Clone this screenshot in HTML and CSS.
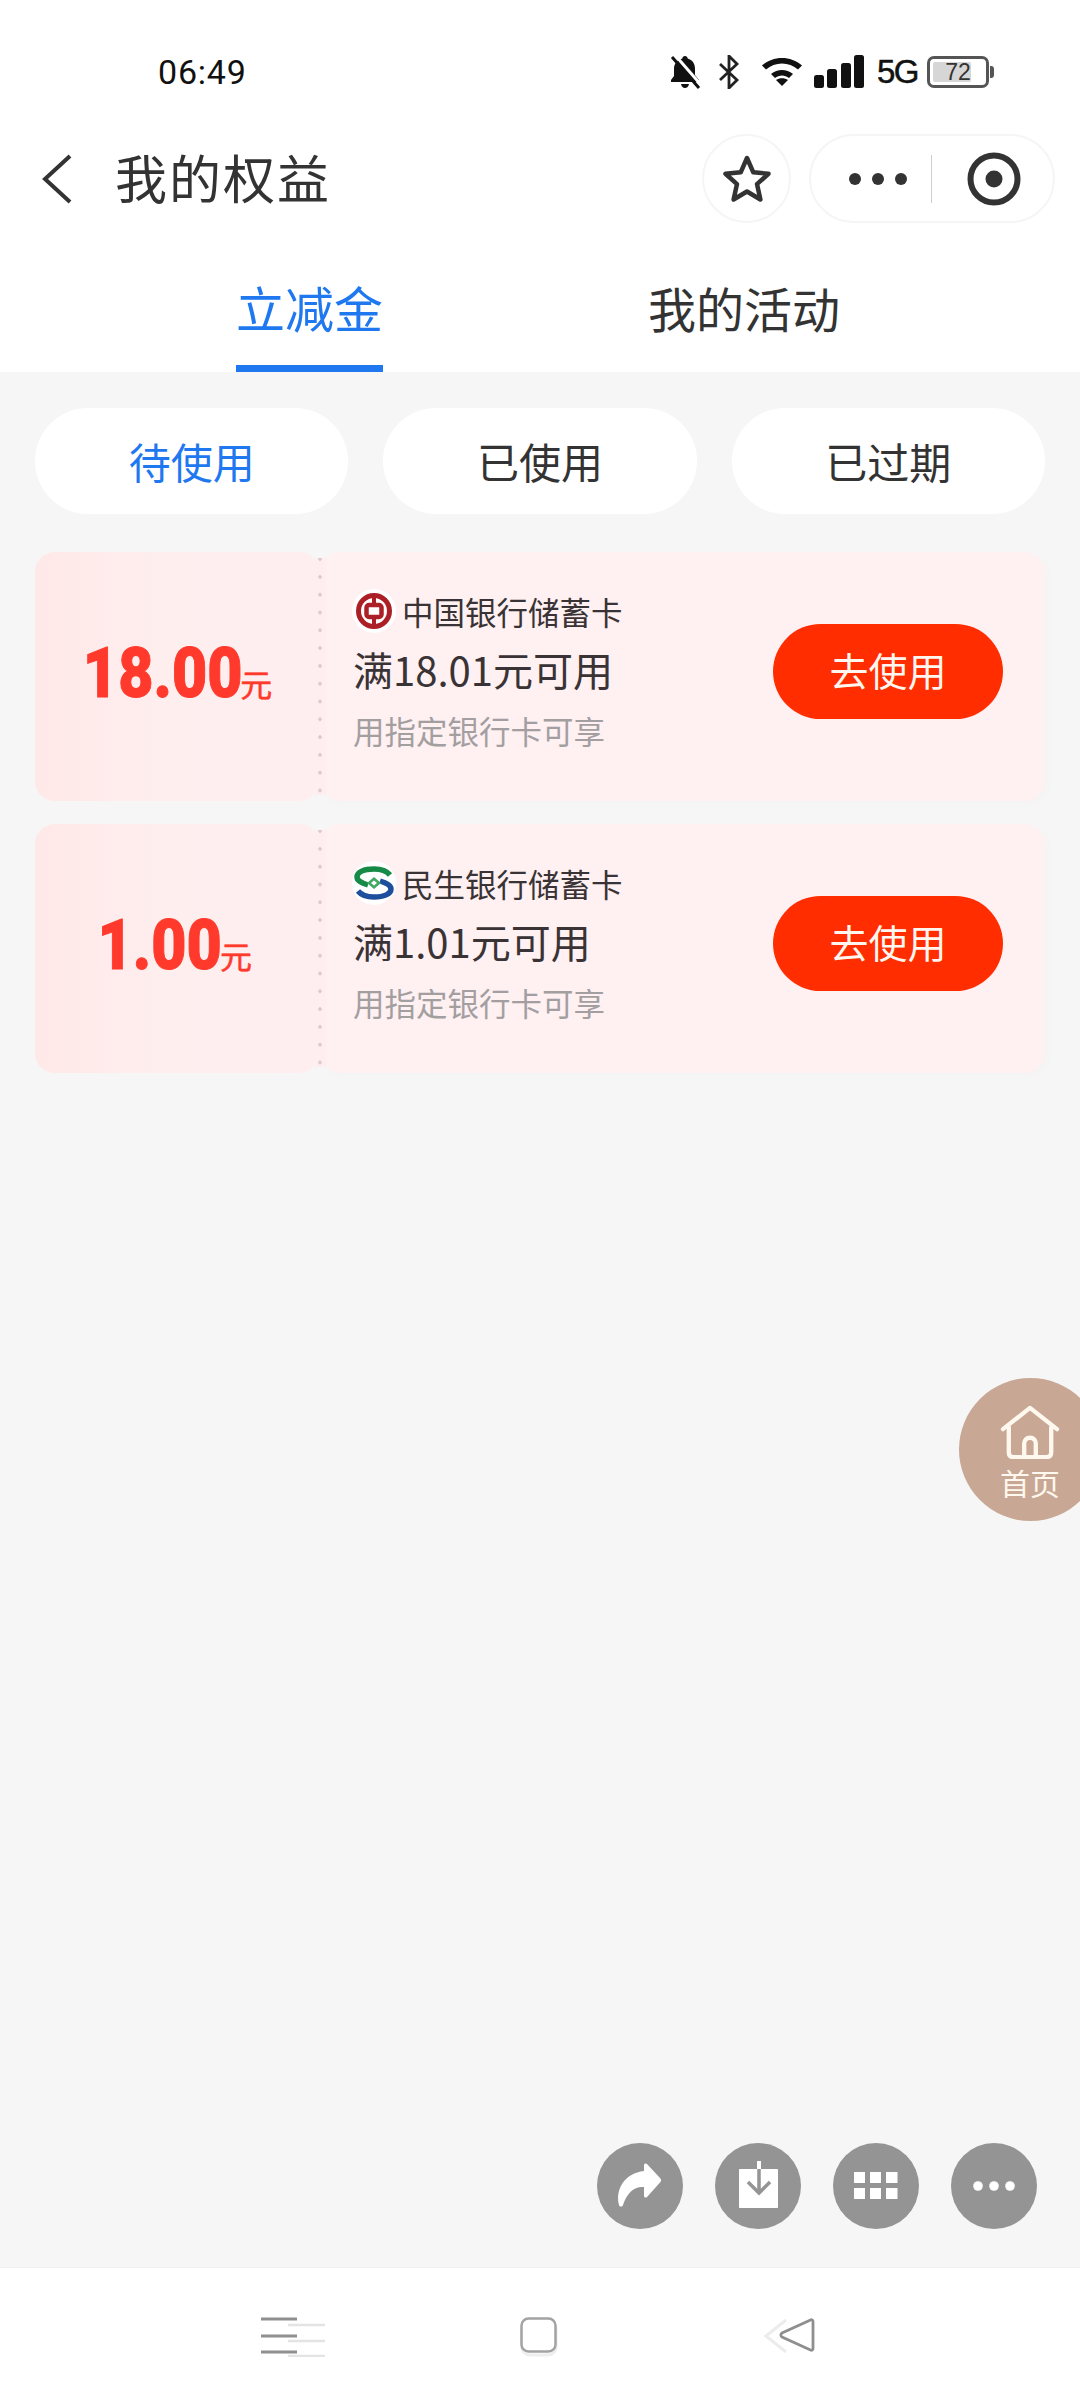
FILE: index.html
```html
<!DOCTYPE html>
<html lang="zh-CN">
<head>
<meta charset="utf-8">
<title>我的权益</title>
<link rel="stylesheet" href="styles.css">
</head>
<body>
<div class="page">
  <div class="top">
    <div class="status">
      <span class="time">06:49</span>
      <div class="status-icons">
        <svg class="ic-bell" viewBox="0 0 32 34"><path d="M16 1c1.600 0 2.500 1 2.700 2.600C23.500 5 26 9 26 14v6l4 5v2H2v-2l3-4v-7c0-5 3-9 8.300-10.400C13.500 2 14.400 1 16 1z" fill="#111"/><path d="M12 29h8c-.5 2.500-2 4-4 4s-3.500-1.500-4-4z" fill="#111"/><path d="M6 0l27 31" stroke="#fff" stroke-width="3"/><path d="M3 2l27 31" stroke="#111" stroke-width="3"/></svg>
        <svg class="ic-bt" viewBox="0 0 22 34"><path d="M2 9l17 16-8 8V1l8 8L2 25" fill="none" stroke="#222" stroke-width="2.800"/></svg>
        <svg class="ic-wifi" viewBox="0 0 42 32"><path d="M1 10.500C12 .5 30 .5 41 10.500l-4 4C28 6.500 14 6.500 5 14.500z" fill="#111"/><path d="M10 19c6.500-5.500 15.500-5.500 22 0l-4 4c-4-3.500-10-3.500-14 0z" fill="#111"/><path d="M15 25c3.500-2.500 8.500-2.500 12 0l-6 6z" fill="#111"/></svg>
        <svg class="ic-signal" viewBox="0 0 50 33"><rect x="0" y="20" width="10" height="13" rx="2.500" fill="#111"/><rect x="13" y="14" width="10" height="19" rx="2.500" fill="#111"/><rect x="27" y="8" width="10" height="25" rx="2.500" fill="#111"/><rect x="40" y="0" width="10" height="33" rx="2.500" fill="#111"/></svg>
        <span class="net">5G</span>
        <div class="battery"><div class="battery-body"><span class="battery-fill"></span><span class="battery-text">72</span></div><span class="battery-nub"></span></div>
      </div>
    </div>

    <div class="nav">
      <svg class="back" viewBox="0 0 30 50"><path d="M28 2L3 25l25 23" fill="none" stroke="#333" stroke-width="4"/></svg>
      <h1 class="title">我的权益</h1>
      <div class="nav-actions">
        <div class="star-btn"><svg viewBox="0 0 50 50"><path d="M25 4l6.300 14.300 15.200 1.500-11.500 10.300 3.400 15.400L25 37.500l-13.400 8 3.400-15.400L3.500 19.800l15.200-1.500z" fill="none" stroke="#333" stroke-width="4.500" stroke-linejoin="round"/></svg></div>
        <div class="capsule">
          <div class="cap-more"><i></i><i></i><i></i></div>
          <span class="cap-sep"></span>
          <svg class="cap-target" viewBox="0 0 54 54"><circle cx="27" cy="27" r="23.500" fill="none" stroke="#333" stroke-width="6"/><circle cx="27" cy="27" r="8.500" fill="#333"/></svg>
        </div>
      </div>
    </div>

    <div class="tabs">
      <div class="tab tab-on">立减金</div>
      <div class="tab">我的活动</div>
    </div>
  </div>

  <main class="content">
    <div class="pills">
      <div class="pill pill-on">待使用</div>
      <div class="pill">已使用</div>
      <div class="pill">已过期</div>
    </div>

    <div class="coupons">
      <div class="coupon">
        <div class="amount"><b>18.00</b><span>元</span></div>
        <div class="dots"></div>
        <div class="info">
          <div class="texts">
            <div class="bank">
              <svg class="logo" viewBox="0 0 44 44"><circle cx="22" cy="22" r="22" fill="#fff"/><circle cx="22" cy="22" r="15.500" fill="none" stroke="#ad1f26" stroke-width="5"/><path d="M22 5v34" stroke="#ad1f26" stroke-width="4"/><rect x="14.500" y="16" width="15" height="12" rx="2.500" fill="#fff" stroke="#ad1f26" stroke-width="4.500"/></svg>
              <span>中国银行储蓄卡</span>
            </div>
            <div class="cond">满18.01元可用</div>
            <div class="note">用指定银行卡可享</div>
          </div>
          <div class="use">去使用</div>
        </div>
      </div>

      <div class="coupon">
        <div class="amount"><b>1.00</b><span>元</span></div>
        <div class="dots"></div>
        <div class="info">
          <div class="texts">
            <div class="bank">
              <svg class="logo" viewBox="0 0 44 44"><circle cx="22" cy="22" r="22" fill="#fff"/><path d="M38 14C34 9 28 8 22 8 12 8 5 11 5 16c0 4 5 6 11 8" fill="none" stroke="#168a46" stroke-width="5.500"/><path d="M6 30c4 5 10 6 16 6 10 0 17-3 17-8 0-4-5-6-11-8" fill="none" stroke="#1e4f9c" stroke-width="5.500"/><path d="M22 16l7 6-7 6-7-6z" fill="#3fa862"/><path d="M22 19.500l3 2.500-3 2.500-3-2.500z" fill="#fff"/></svg>
              <span>民生银行储蓄卡</span>
            </div>
            <div class="cond">满1.01元可用</div>
            <div class="note">用指定银行卡可享</div>
          </div>
          <div class="use">去使用</div>
        </div>
      </div>
    </div>

    <div class="tools">
      <div class="tool"><svg viewBox="0 0 86 86"><path d="M22 62C18 46 28 30 47 28v-6c0-1.500 2-2 3-1l13 14c1.500 1.500 1.500 3 0 4.500L50 54c-1 1-3 .5-3-1v-9C37 43 30 50 26 62c-.6 2-3.500 2-4 0z" fill="#fff"/></svg></div>
      <div class="tool"><svg viewBox="0 0 86 86"><path d="M25 26h17v-8h4v8h16c.6 0 1 .4 1 1v37c0 .6-.4 1-1 1H25c-.6 0-1-.4-1-1V27c0-.6.4-1 1-1z" fill="#fff"/><path d="M44 26v22M33 39l11 11 11-11" fill="none" stroke="#949494" stroke-width="3.500"/></svg></div>
      <div class="tool"><svg viewBox="0 0 86 86"><g fill="#fff"><rect x="21" y="29" width="11" height="11"/><rect x="37" y="29" width="11" height="11"/><rect x="53" y="29" width="11.500" height="11"/><rect x="21" y="45" width="11" height="11"/><rect x="37" y="45" width="11" height="11"/><rect x="53" y="45" width="11.500" height="11"/></g></svg></div>
      <div class="tool"><svg viewBox="0 0 86 86"><g fill="#fff"><circle cx="27" cy="43" r="4.800"/><circle cx="43" cy="43" r="4.800"/><circle cx="59" cy="43" r="4.800"/></g></svg></div>
    </div>
  </main>

  <footer class="sysnav">
    <svg class="sys-menu" viewBox="0 0 66 40"><g stroke="#e4e4e4" stroke-width="2.500"><path d="M27 8h37M27 24h37M27 39h37"/></g><g stroke="#8f8f8f" stroke-width="3"><path d="M0 2h36M0 19h36M0 35h36"/></g></svg>
    <svg class="sys-home" viewBox="0 0 38 40"><rect x="2" y="4" width="34" height="34" rx="8" fill="none" stroke="#eeeeee" stroke-width="3"/><rect x="1.500" y="1.500" width="34" height="33" rx="7" fill="#fff" stroke="#a3a3a3" stroke-width="2.500"/></svg>
    <svg class="sys-back" viewBox="0 0 54 36"><path d="M24 3L4 19l20 16" fill="none" stroke="#ececec" stroke-width="3"/><path d="M51 4.500v27c0 1.500-1.200 2.200-2.500 1.500L20 20c-1.500-1-1.500-3 0-4L48.500 3c1.300-.7 2.500 0 2.500 1.500z" fill="#fff" stroke="#8f8f8f" stroke-width="2.800"/></svg>
  </footer>

  <div class="home-float">
    <svg viewBox="0 0 62 56"><path d="M3 25L31 3l28 22" fill="none" stroke="#fff8ee" stroke-width="4.500" stroke-linecap="round" stroke-linejoin="round"/><path d="M9 22v27c0 3 1.500 5 5 5h34c3.500 0 5-1.500 5-5V22" fill="none" stroke="#fff8ee" stroke-width="4.500"/><path d="M25 54V40c0-4 2.500-6 6-6s6 2 6 6v14" fill="none" stroke="#fff8ee" stroke-width="4.500"/></svg>
    <span>首页</span>
  </div>
</div>
</body>
</html>
```
FILE: styles.css
```css
* { box-sizing: border-box; }
html, body { margin: 0; padding: 0; }
body { font-family: "Noto Sans CJK SC", "Noto Sans", sans-serif; background: #f6f6f6; color: #333; }
.page { position: relative; width: 1080px; height: 2400px; display: flex; flex-direction: column; overflow: hidden; background: #f6f6f6; }

.top { background: #fff; height: 372px; flex: none; display: flex; flex-direction: column; }

.status { height: 134px; flex: none; padding: 55px 86px 0 158px; display: flex; justify-content: space-between; align-items: flex-start; }
.time { font-family: Roboto, sans-serif; font-size: 34px; line-height: 34px; color: #111; letter-spacing: .8px; }
.status-icons { display: flex; align-items: flex-start; }
.ic-bell { width: 32px; height: 34px; }
.ic-bt { width: 22px; height: 34px; margin-left: 17px; }
.ic-wifi { width: 42px; height: 32px; margin-left: 21px; }
.ic-signal { width: 50px; height: 33px; margin-left: 11px; }
.net { font-family: "Liberation Sans", sans-serif; font-size: 33px; line-height: 34px; color: #111; letter-spacing: -1.500px; margin-left: 13px; -webkit-text-stroke: .5px #111; }
.battery { display: flex; align-items: center; margin-left: 9px; height: 33px; }
.battery-body { position: relative; width: 62px; height: 32px; border: 3px solid #555; border-radius: 7px; display: flex; align-items: center; justify-content: center; }
.battery-fill { position: absolute; left: 3px; top: 3px; bottom: 3px; width: 38px; background: #d6d6d6; border-radius: 2px; }
.battery-text { position: relative; font-family: "Liberation Sans", sans-serif; font-size: 23px; line-height: 26px; color: #333; }
.battery-nub { width: 4px; height: 12px; background: #555; border-radius: 0 3px 3px 0; margin-left: 1px; }

.nav { height: 89px; flex: none; display: flex; align-items: center; padding: 0 25px 0 42px; }
.back { width: 30px; height: 50px; flex: none; }
.title { margin: 0 0 4px 43px; font-size: 52px; line-height: 60px; font-weight: 400; color: #333; letter-spacing: 2px; }
.nav-actions { margin-left: auto; display: flex; gap: 18px; }
.star-btn { width: 89px; height: 89px; border: 2px solid #f5f5f5; border-radius: 50%; display: flex; align-items: center; justify-content: center; }
.star-btn svg { width: 50px; height: 50px; }
.capsule { width: 246px; height: 89px; border: 2px solid #f5f5f5; border-radius: 45px; display: flex; align-items: center; padding-left: 38px; }
.cap-more { display: flex; gap: 11px; }
.cap-more i { width: 12px; height: 12px; border-radius: 50%; background: #333; }
.cap-sep { width: 1px; height: 48px; background: #cfcfcf; margin-left: 24px; }
.cap-target { width: 54px; height: 54px; margin-left: 35px; }

.tabs { flex: 1; display: flex; padding-left: 236px; gap: 265px; margin-top: 15px; }
.tab { height: 134px; font-size: 48px; line-height: 76px; color: #333; padding-top: 31px; }
.tab-on { font-size: 49px; color: #1f78f0; border-bottom: 7px solid #1f78f0; }

.content { flex: 1; display: flex; flex-direction: column; padding: 36px 35px 0; min-height: 0; }
.pills { display: flex; gap: 35px; flex: none; }
.pill { flex: 1; height: 106px; border-radius: 53px; background: #fff; font-size: 42px; line-height: 105px; text-align: center; color: #333; }
.pill-on { color: #1f78f0; }

.coupons { margin-top: 38px; display: flex; flex-direction: column; gap: 23px; flex: none; }
.coupon { display: flex; height: 249px; width: 1010px; }
.amount { flex: 0 0 279px; background: linear-gradient(90deg, #ffe8e8 0%, #ffeeee 45%, #ffeeef 100%); border-radius: 20px 12px 12px 20px; display: flex; align-items: baseline; justify-content: center; padding-right: 18px; color: #ff3a2d; line-height: 243px; }
.amount b { display: block; font-family: Roboto, sans-serif; font-size: 70px; font-weight: 900; transform: scaleX(.87); transform-origin: right center; -webkit-text-stroke: 1px #ff3a2d; }
.amount span { font-size: 32px; margin-left: -2px; -webkit-text-stroke: .5px #ff3a2d; }
.dots { flex: 0 0 12px; margin: 6px 0; background: #ffeef0 radial-gradient(circle at 6px 8.900px, #dccbce 1.500px, transparent 2px) 0 10px / 12px 17.800px repeat-y; }
.info { flex: 1; background: #fff0f2; border-radius: 12px 20px 20px 12px; box-shadow: 4px 4px 10px rgba(0, 0, 0, .012); display: flex; align-items: flex-start; padding: 0 42px 0 27px; justify-content: space-between; }
.texts { padding-top: 37px; }
.bank { display: flex; align-items: center; height: 44px; font-size: 31.500px; line-height: 44px; color: #3a3335; }
.logo { width: 44px; height: 44px; margin-right: 6px; flex: none; margin-left: -1px; }
.cond { margin-top: 12px; font-size: 40px; line-height: 48px; color: #3a3335; white-space: nowrap; }
.note { margin-top: 15px; font-size: 31.500px; line-height: 44px; color: #a39fa1; white-space: nowrap; }
.use { margin-top: 72px; width: 230px; height: 95px; border-radius: 48px; background: #ff2d00; color: #fff6ef; font-size: 39px; line-height: 91px; text-align: center; }

.tools { margin-top: auto; margin-bottom: 38px; margin-right: 8px; display: flex; justify-content: flex-end; gap: 32px; flex: none; }
.tool { width: 86px; height: 86px; border-radius: 50%; background: #949494; }
.tool svg { display: block; width: 86px; height: 86px; }

.sysnav { height: 133px; flex: none; background: #fff; border-top: 1px solid #f0f0f0; padding: 49px 0 0 261px; display: flex; align-items: flex-start; }
.sys-menu { width: 66px; height: 40px; flex: none; }
.sys-home { width: 38px; height: 40px; flex: none; margin-left: 193px; }
.sys-back { width: 54px; height: 36px; flex: none; margin-left: 204px; }

.home-float { position: absolute; left: 959px; top: 1378px; width: 143px; height: 143px; border-radius: 50%; background: #c8a794; display: flex; flex-direction: column; align-items: flex-start; padding: 27px 0 0 41px; color: #fff8ee; }
.home-float svg { width: 60px; height: 54px; }
.home-float span { font-size: 30px; line-height: 36px; margin-top: 5px; width: 62px; white-space: nowrap; }
```
